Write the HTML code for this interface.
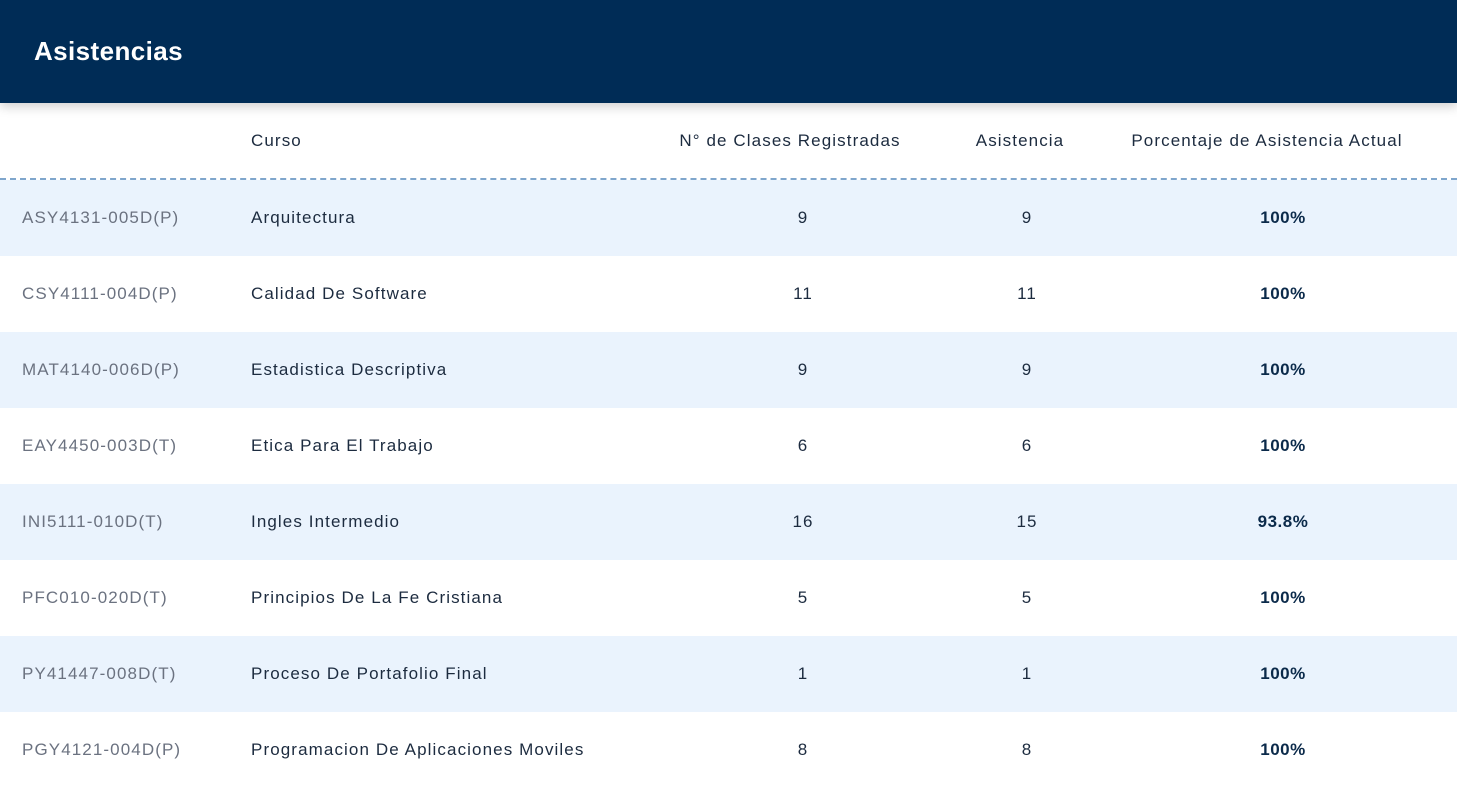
<!DOCTYPE html>
<html><head><meta charset="utf-8"><style>
body{margin:0;width:1457px;height:787px;overflow:hidden;background:#fff;font-family:"Liberation Sans",sans-serif;color:#1c2b3f}
.hdr{position:absolute;left:0;top:0;width:1457px;height:103px;background:#002c56;box-shadow:0 4px 10px rgba(0,0,0,.18);z-index:2}
.hdr h1{position:absolute;left:34px;top:36px;margin:0;font-size:26px;font-weight:bold;color:#fff;letter-spacing:0.4px}
.th{position:absolute;top:103px;height:77px;width:1457px;border-bottom:2px dashed #7fa6cc;box-sizing:border-box}
.row{position:absolute;left:0;width:1457px;height:76px}
.c{position:absolute;top:0;line-height:76px;font-size:17px;letter-spacing:1.1px;white-space:nowrap}
.code{left:22px;color:#6b7280}
.cur{left:251px}
.n1{left:703px;width:200px;text-align:center}
.n2{left:927px;width:200px;text-align:center}
.n3{left:1183px;width:200px;text-align:center;font-weight:bold;color:#0b2a4a;letter-spacing:0.5px}
.alt{background:#eaf3fd}
</style></head><body>
<div class="hdr"><h1>Asistencias</h1></div>
<div class="th">
<div class="c cur" style="line-height:76px">Curso</div>
<div class="c" style="left:590px;width:400px;text-align:center">N° de Clases Registradas</div>
<div class="c" style="left:920px;width:200px;text-align:center">Asistencia</div>
<div class="c" style="left:1067px;width:400px;text-align:center">Porcentaje de Asistencia Actual</div>
</div>
<div class="row alt" style="top:180px"><div class="c code">ASY4131-005D(P)</div><div class="c cur">Arquitectura</div><div class="c n1">9</div><div class="c n2">9</div><div class="c n3">100%</div></div>
<div class="row" style="top:256px"><div class="c code">CSY4111-004D(P)</div><div class="c cur">Calidad De Software</div><div class="c n1">11</div><div class="c n2">11</div><div class="c n3">100%</div></div>
<div class="row alt" style="top:332px"><div class="c code">MAT4140-006D(P)</div><div class="c cur">Estadistica Descriptiva</div><div class="c n1">9</div><div class="c n2">9</div><div class="c n3">100%</div></div>
<div class="row" style="top:408px"><div class="c code">EAY4450-003D(T)</div><div class="c cur">Etica Para El Trabajo</div><div class="c n1">6</div><div class="c n2">6</div><div class="c n3">100%</div></div>
<div class="row alt" style="top:484px"><div class="c code">INI5111-010D(T)</div><div class="c cur">Ingles Intermedio</div><div class="c n1">16</div><div class="c n2">15</div><div class="c n3">93.8%</div></div>
<div class="row" style="top:560px"><div class="c code">PFC010-020D(T)</div><div class="c cur">Principios De La Fe Cristiana</div><div class="c n1">5</div><div class="c n2">5</div><div class="c n3">100%</div></div>
<div class="row alt" style="top:636px"><div class="c code">PY41447-008D(T)</div><div class="c cur">Proceso De Portafolio Final</div><div class="c n1">1</div><div class="c n2">1</div><div class="c n3">100%</div></div>
<div class="row" style="top:712px"><div class="c code">PGY4121-004D(P)</div><div class="c cur">Programacion De Aplicaciones Moviles</div><div class="c n1">8</div><div class="c n2">8</div><div class="c n3">100%</div></div>
</body></html>
